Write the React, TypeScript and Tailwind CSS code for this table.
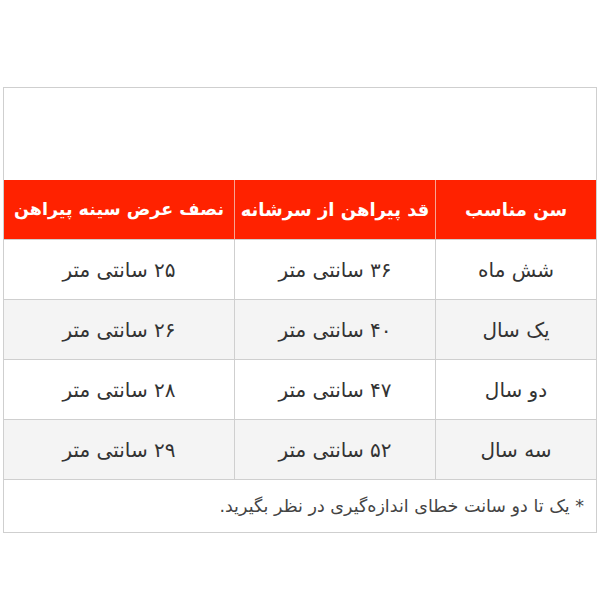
import React from 'react';

const rows = [
  { age: 'شش ماه', height: '۳۶ سانتی متر', chest: '۲۵ سانتی متر' },
  { age: 'یک سال', height: '۴۰ سانتی متر', chest: '۲۶ سانتی متر' },
  { age: 'دو سال', height: '۴۷ سانتی متر', chest: '۲۸ سانتی متر' },
  { age: 'سه سال', height: '۵۲ سانتی متر', chest: '۲۹ سانتی متر' },
];

export default function App() {
  return (
    <div
      className="w-[600px] h-[600px] bg-white pt-[87px] pl-[3px]"
      style={{ fontFamily: '"DejaVu Sans", "Liberation Sans", sans-serif' }}
    >
      <table dir="rtl" className="w-[593px] border-collapse border border-[#cfcfcf] table-fixed">
        <colgroup>
          <col className="w-[161px]" />
          <col className="w-[201px]" />
          <col className="w-[231px]" />
        </colgroup>
        <tbody>
          <tr>
            <td colSpan={3} className="h-[92px] bg-white"></td>
          </tr>
          <tr className="bg-[#ff2200] text-white">
            <th className="h-[60px] font-bold text-[18px] border-l border-[#f7a493]">سن مناسب</th>
            <th className="h-[60px] font-bold text-[18px] border-l border-[#f7a493]">قد پیراهن از سرشانه</th>
            <th className="h-[60px] font-bold text-[17.5px]">نصف عرض سینه پیراهن</th>
          </tr>
          {rows.map((r, i) => (
            <tr key={i} className={i % 2 === 1 ? 'bg-[#f4f4f4]' : 'bg-white'}>
              <td className="h-[60px] text-center text-[20px] text-[#333] border border-[#cfcfcf]">{r.age}</td>
              <td className="h-[60px] text-center text-[20px] text-[#333] border border-[#cfcfcf]">{r.height}</td>
              <td className="h-[60px] text-center text-[20px] text-[#333] border border-[#cfcfcf]">{r.chest}</td>
            </tr>
          ))}
          <tr>
            <td colSpan={3} className="h-[53px] pr-[12px] text-right text-[17.5px] text-[#444] border border-[#cfcfcf]">
              * یک تا دو سانت خطای اندازه‌گیری در نظر بگیرید.
            </td>
          </tr>
        </tbody>
      </table>
    </div>
  );
}
